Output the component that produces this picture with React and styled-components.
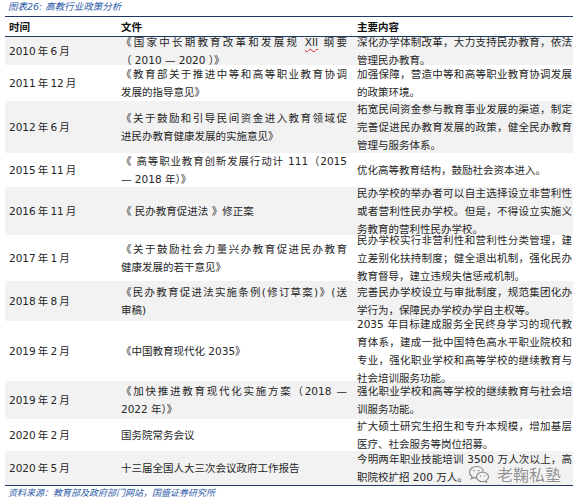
import React from "react";
import styled, { createGlobalStyle } from "styled-components";

const GlobalStyle = createGlobalStyle`
  html, body { margin: 0; padding: 0; background: #fff; }
  body {
    font-family: "DejaVu Sans", "Noto Sans CJK SC", sans-serif;
    color: #262626;
  }
`;

const Page = styled.div`
  position: relative;
  width: 578px;
  height: 502px;
  padding: 0 5px;
  box-sizing: border-box;
`;

const Caption = styled.div`
  height: 16px;
  padding-left: 3px;
  font-size: 9.5px;
  line-height: 14px;
  font-style: italic;
  color: #2a5aa8;
`;

const Table = styled.div`
  border-top: 1px solid #1f3864;
  border-bottom: 1px solid #1f3864;
`;

const Row = styled.div`
  display: grid;
  grid-template-columns: 110px 237px 1fr;
  height: ${(p) => p.$h}px;
  background: ${(p) => (p.$shade ? "#f2f2f2" : "#ffffff")};
  box-sizing: border-box;
`;

const HeadRow = styled(Row)`
  border-bottom: 1px solid #1f3864;
  font-weight: 700;
  color: #111;
`;

const Cell = styled.div`
  display: flex;
  flex-direction: column;
  justify-content: center;
  min-height: 0;
  padding: 0 ${(p) => p.$pr || 0}px 0 ${(p) => p.$pl || 0}px;
  font-size: 10.5px;
  line-height: 18px;
`;

const Line = styled.div`
  text-align: ${(p) => (p.$justify ? "justify" : "left")};
  text-align-last: ${(p) => (p.$justify ? "justify" : "auto")};
`;

const Squiggle = styled.span`
  text-decoration: underline wavy #e02020;
  text-decoration-thickness: 1px;
  text-underline-offset: 2px;
`;

const Source = styled.div`
  padding-left: 3px;
  font-size: 9px;
  line-height: 14px;
  font-style: italic;
  color: #2a5aa8;
`;

const Watermark = styled.div`
  position: absolute;
  left: 468px;
  top: 465px;
  display: flex;
  align-items: center;
  gap: 7px;
  font-family: "Noto Sans CJK SC", sans-serif;
  font-size: 16px;
  line-height: 18px;
  color: rgba(125, 125, 125, 0.85);
  text-shadow: 0 0 2px #fff;
  pointer-events: none;
`;

const T = "\u2009";

const rows = [
  {
    h: 28,
    time: `2010${T}年${T}6${T}月`,
    file: [
      <>《国家中长期教育改革和发展规 <Squiggle>XII</Squiggle> 纲要</>,
      "（ 2010 — 2020 ）》",
    ],
    content: ["深化办学体制改革，大力支持民办教育，依法", "管理民办教育。"],
  },
  {
    h: 36,
    time: `2011${T}年${T}12${T}月`,
    file: ["《教育部关于推进中等和高等职业教育协调", "发展的指导意见》"],
    content: ["加强保障，营造中等和高等职业教育协调发展", "的政策环境。"],
  },
  {
    h: 52,
    time: `2012${T}年${T}6${T}月`,
    file: ["《关于鼓励和引导民间资金进入教育领域促", "进民办教育健康发展的实施意见》"],
    content: [
      "拓宽民间资金参与教育事业发展的渠道，制定",
      "完善促进民办教育发展的政策，健全民办教育",
      "管理与服务体系。",
    ],
  },
  {
    h: 34,
    time: `2015${T}年${T}11${T}月`,
    file: ["《 高等职业教育创新发展行动计 111（2015", "— 2018 年）》"],
    content: ["优化高等教育结构，鼓励社会资本进入。"],
  },
  {
    h: 48,
    time: `2016${T}年${T}11${T}月`,
    file: ["《 民办教育促进法 》修正案"],
    content: [
      "民办学校的举办者可以自主选择设立非营利性",
      "或者营利性民办学校。但是，不得设立实施义",
      "务教育的营利性民办学校。",
    ],
  },
  {
    h: 46,
    time: `2017${T}年${T}1${T}月`,
    file: ["《关于鼓励社会力量兴办教育促进民办教育", "健康发展的若干意见》"],
    content: [
      "民办学校实行非营利性和营利性分类管理，建",
      "立差别化扶持制度；健全退出机制，强化民办",
      "教育督导，建立违规失信惩戒机制。",
    ],
  },
  {
    h: 40,
    time: `2018${T}年${T}8${T}月`,
    file: ["《民办教育促进法实施条例(修订草案)》(送", "审稿)"],
    content: [
      "完善民办学校设立与审批制度，规范集团化办",
      "学行为，保障民办学校办学自主权等。",
    ],
  },
  {
    h: 60,
    time: `2019${T}年${T}2${T}月`,
    file: ["《中国教育现代化 2035》"],
    content: [
      "2035 年目标建成服务全民终身学习的现代教",
      "育体系，建成一批中国特色高水平职业院校和",
      "专业，强化职业学校和高等学校的继续教育与",
      "社会培训服务功能。",
    ],
  },
  {
    h: 38,
    time: `2019${T}年${T}2${T}月`,
    file: ["《加快推进教育现代化实施方案（2018 —", "2022 年）》"],
    content: ["强化职业学校和高等学校的继续教育与社会培", "训服务功能。"],
  },
  {
    h: 32,
    time: `2020${T}年${T}2${T}月`,
    file: ["国务院常务会议"],
    content: ["扩大硕士研究生招生和专升本规模，增加基层", "医疗、社会服务等岗位招募。"],
  },
  {
    h: 34,
    time: `2020${T}年${T}5${T}月`,
    file: ["十三届全国人大三次会议政府工作报告"],
    content: ["今明两年职业技能培训 3500 万人次以上，高", "职院校扩招 200 万人。"],
  },
];

function Lines({ items }) {
  return items.map((t, i) => (
    <Line key={i} $justify={items.length > 1 && i < items.length - 1}>
      {t}
    </Line>
  ));
}

function WeChatIcon() {
  return (
    <svg width="22" height="18" viewBox="0 0 22 18" fill="none" stroke="rgba(125,125,125,0.85)" strokeWidth="1.2">
      <path d="M8.5 1.5c-4 0-7 2.6-7 5.7 0 1.8 1 3.3 2.5 4.4l-.7 2.2 2.6-1.4c.8.3 1.7.4 2.6.4" />
      <path d="M8.5 1.5c3.6 0 6.5 2.1 6.9 4.8" />
      <path d="M14.5 7.2c-3.3 0-6 2.1-6 4.7s2.7 4.7 6 4.7c.7 0 1.4-.1 2-.3l2.1 1.1-.5-1.8c1.4-.9 2.4-2.2 2.4-3.7 0-2.6-2.7-4.7-6-4.7z" />
      <circle cx="6" cy="5.6" r="0.8" fill="rgba(125,125,125,0.85)" stroke="none" />
      <circle cx="10.8" cy="5.6" r="0.8" fill="rgba(125,125,125,0.85)" stroke="none" />
      <circle cx="12.5" cy="11" r="0.7" fill="rgba(125,125,125,0.85)" stroke="none" />
      <circle cx="16.5" cy="11" r="0.7" fill="rgba(125,125,125,0.85)" stroke="none" />
    </svg>
  );
}

export default function App() {
  return (
    <>
      <GlobalStyle />
      <Page>
        <Caption>图表26:  高教行业政策分析</Caption>
        <Table>
          <HeadRow $h={20}>
            <Cell $pl={4}>时间</Cell>
            <Cell $pl={6}>文件</Cell>
            <Cell $pl={5}>主要内容</Cell>
          </HeadRow>
          {rows.map((r, i) => (
            <Row key={i} $h={r.h} $shade={i % 2 === 0}>
              <Cell $pl={4}>{r.time}</Cell>
              <Cell $pl={6} $pr={5}>
                <Lines items={r.file} />
              </Cell>
              <Cell $pl={5} $pr={1}>
                <Lines items={r.content} />
              </Cell>
            </Row>
          ))}
        </Table>
        <Source>资料来源：教育部及政府部门网站，国盛证券研究所</Source>
        <Watermark>
          <WeChatIcon />
          <span>老鞠私塾</span>
        </Watermark>
      </Page>
    </>
  );
}
